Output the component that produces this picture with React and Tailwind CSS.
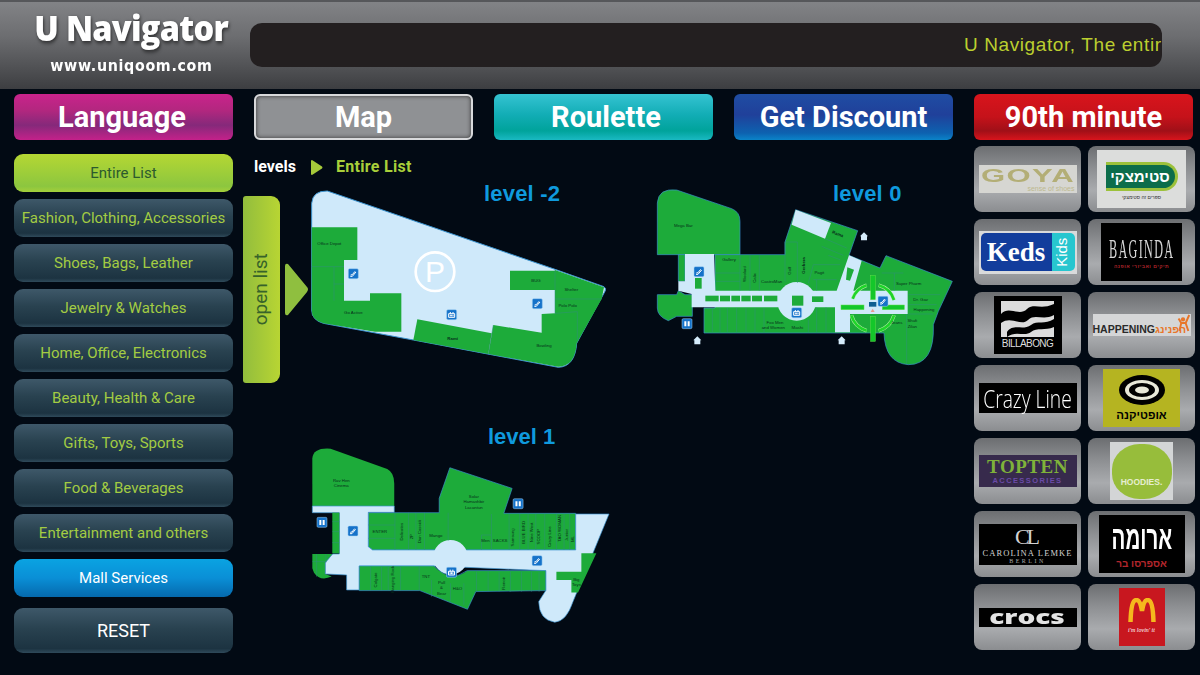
const GREEN = '#1dab3a';
const LIGHT = '#cfe9fa';
const EDGE = '#3b93cf';
const SHOP = '#2f8f78';

const tabs = [
  { label: 'Language', cls: 'pr-[3px] bg-[linear-gradient(180deg,#c9238c_0%,#b3277f_35%,#85297a_68%,#c4218a_100%)]' },
  { label: 'Map', cls: 'bg-[#8f9194] border-2 border-[#d8d9db] shadow-[inset_0_0_4px_#333]' },
  { label: 'Roulette', cls: 'pl-[5px] bg-[linear-gradient(180deg,#35c3d2_0%,#12adb5_45%,#00a39b_80%,#1ab9c2_100%)]' },
  { label: 'Get Discount', cls: 'bg-[linear-gradient(180deg,#1f4da3_0%,#20409a_45%,#0d62b0_85%,#0a84c9_100%)]' },
  { label: '90th minute', cls: 'bg-[linear-gradient(180deg,#d8141c_0%,#c5121a_50%,#a01018_80%,#d8141c_100%)]' },
];

const categories = [
  'Fashion, Clothing, Accessories',
  'Shoes, Bags, Leather',
  'Jewelry & Watches',
  'Home, Office, Electronics',
  'Beauty, Health & Care',
  'Gifts, Toys, Sports',
  'Food & Beverages',
  'Entertainment and others',
];

function Label({ x, y, rot, bold, children }) {
  return (
    <text
      x={x}
      y={y}
      textAnchor="middle"
      fontSize="13"
      fontWeight={bold ? 700 : 400}
      fill="#07301a"
      fontFamily="Liberation Sans, sans-serif"
      transform={rot ? `rotate(${rot} ${x} ${y})` : undefined}
    >
      {children}
    </text>
  );
}

function MapIcon({ x, y, kind }) {
  return (
    <g transform={`translate(${x - 15} ${y - 15})`}>
      <rect width="30" height="30" rx="4" fill="#1572c9" stroke="#9fd0f2" strokeWidth="1.5" />
      {kind === 'esc' && <path d="M6 23 L12 23 L23 10 M7 19 L12 18 L20 8" stroke="#fff" strokeWidth="3" fill="none" />}
      {kind === 'lift' && <path d="M6 23 V12 H24 V23 Z M11 12 V7 M19 12 V7 M11 15 V20 M15 15 V20 M19 15 V20" stroke="#fff" strokeWidth="3" fill="none" />}
      {kind === 'wc' && (
        <path d="M7 8 H13 V23 H7 Z M17 8 H23 V23 H17 Z" fill="#fff" />
      )}
    </g>
  );
}

function House({ x, y }) {
  return <path d={`M${x - 12} ${y} L${x} ${y - 12} L${x + 12} ${y} L${x + 9} ${y} V${y + 12} H${x - 9} V${y} Z`} fill="#d5ecfb" />;
}

function Shops({ lines }) {
  return (
    <g stroke={SHOP} strokeWidth="1.6" fill="none">
      {lines.map((d) => (
        <path key={d} d={d} />
      ))}
    </g>
  );
}

function LevelMinus2() {
  return (
    <svg viewBox="204 54 906 546" width="302" height="182" className="block">
      <path
        d="M215 100 Q218 62 262 63 L945 298 L1092 350 Q1100 356 1095 364 L1010 520 Q1005 590 955 592 L520 510 L250 460 Q215 450 215 420 Z"
        fill={LIGHT}
        stroke={EDGE}
        strokeWidth="3"
      />
      <g fill={GREEN}>
        <path d="M215 172 H352 V270 H312 V392 H390 V370 H484 V485 H405 L250 460 Q215 450 215 420 Z" />
        <path d="M532 448 L755 490 L745 552 L520 510 Z" />
        <path d="M810 302 H945 V360 H810 Z" />
        <path d="M945 300 L1092 352 L1085 387 H945 Z" />
        <path d="M945 387 H1085 L1010 520 Q1005 590 955 590 L745 552 L760 465 L905 488 V432 L945 430 Z" />
      </g>
      <Shops lines={['M215 290 H312', 'M282 290 V392', 'M282 342 H312', 'M945 300 V430', 'M945 387 H1085', 'M945 430 L1012 425 V510', 'M760 465 L745 552']} />
      <circle cx="585" cy="305" r="58" fill="none" stroke="#fff" strokeWidth="8" />
      <text x="585" y="337" textAnchor="middle" fontSize="90" fill="#fff" fontFamily="Liberation Sans, sans-serif">P</text>
      <MapIcon x={340} y={311} kind="esc" />
      <MapIcon x={892} y={401} kind="esc" />
      <MapIcon x={635} y={434} kind="lift" />
      <Label x={268} y={226}>Office Depot</Label>
      <Label x={340} y={431}>Go Active</Label>
      <Label x={888} y={335}>BUG</Label>
      <Label x={994} y={362}>Shelter</Label>
      <Label x={983} y={410}>Polo Polo</Label>
      <Label x={638} y={509} bold>Rami</Label>
      <Label x={912} y={532}>Bowling</Label>
    </svg>
  );
}

function LevelZero() {
  const arcs = [
    'M638 392 A66 66 0 0 1 680 352',
    'M716 352 A66 66 0 0 1 762 396',
    'M762 442 A68 68 0 0 1 716 488',
    'M680 488 A68 68 0 0 1 634 442',
  ];
  return (
    <svg viewBox="45 60 900 540" width="300" height="180" className="block">
      <g fill={GREEN} stroke={EDGE} strokeWidth="2">
        <path d="M52 105 Q55 60 110 66 L275 122 Q300 132 300 160 V260 H52 Z" />
        <path d="M225 260 H435 V222 L467 125 L653 188 L627 262 L720 300 L738 263 L937 340 L895 430 L880 470 Q885 590 805 590 Q735 585 732 495 H192 V420 H225 Z" />
        <path d="M52 380 H110 L115 368 L135 380 H157 V445 H110 L85 458 Q52 445 52 420 Z" />
        <path d="M115 260 H135 V340 H115 Z" />
      </g>
      <g fill={LIGHT}>
        <path d="M115 340 H135 V258 H222 L226 368 H590 L627 262 L665 278 L640 368 H803 V438 H630 V493 H585 V418 H155 V378 L115 368 Z" />
        <circle cx="470" cy="400" r="58" />
        <path d="M467 125 L573 165 L555 212 L455 170 Z" />
      </g>
      <g fill={GREEN}>
        <rect x="196" y="383" width="40" height="17" />
        <rect x="240" y="383" width="30" height="17" />
        <rect x="274" y="383" width="26" height="17" />
        <rect x="304" y="383" width="28" height="17" />
        <rect x="336" y="383" width="30" height="17" />
        <rect x="372" y="383" width="40" height="17" />
        <rect x="456" y="383" width="34" height="30" />
        <rect x="516" y="385" width="34" height="17" />
        <rect x="165" y="330" width="20" height="32" />
        <path d="M622 298 L642 305 L630 338 L618 335 Z" />
      </g>
      <Shops
        lines={[
          'M225 315 H300', 'M225 340 H300', 'M300 262 V368', 'M330 262 V368', 'M358 262 V368', 'M435 222 V340', 'M435 222 H472 V345',
          'M520 290 L505 345', 'M520 290 H600', 'M555 212 L620 240', 'M545 235 L610 262', 'M565 262 L600 275', 'M520 335 H590', 'M530 335 V368',
          'M217 420 V493', 'M240 420 V493', 'M262 420 V493', 'M290 420 V493', 'M318 420 V493', 'M345 420 V493', 'M372 420 V493', 'M505 455 V493', 'M530 418 V493', 'M558 418 V493',
          'M725 315 H790', 'M763 315 V368', 'M805 380 H900', 'M805 410 H890', 'M805 438 H880', 'M800 438 V590',
        ]}
      />
      <g fill="none" stroke="#b8f0a8" strokeWidth="11">
        {arcs.map((d) => (
          <path key={d} d={d} />
        ))}
      </g>
      <g fill="none" stroke="#1fd42a" strokeWidth="8">
        {arcs.map((d) => (
          <path key={d} d={d} />
        ))}
      </g>
      <g fill="#14c72a" stroke="#5fe048" strokeWidth="1.5">
        <rect x="692" y="322" width="14" height="73" />
        <rect x="692" y="445" width="14" height="75" />
        <rect x="603" y="411" width="69" height="14" />
        <rect x="727" y="411" width="66" height="14" />
      </g>
      <rect x="687" y="402" width="22" height="14" fill="#0f5e91" />
      <path d="M692 432 L698 422 L704 432 Z" fill="#e89a8f" />
      <MapIcon x={729} y={400} kind="esc" />
      <MapIcon x={177} y={311} kind="esc" />
      <MapIcon x={470} y={434} kind="lift" />
      <MapIcon x={141} y={467} kind="wc" />
      <House x={172} y={517} />
      <House x={605} y={517} />
      <House x={672} y={205} />
      <Label x={130} y={176}>Mega Bar</Label>
      <Label x={267} y={279}>Gallery</Label>
      <Label x={318} y={318} rot={-90}>Woolard</Label>
      <Label x={348} y={330} rot={-90}>Calix</Label>
      <Label x={395} y={344}>CastroMan</Label>
      <Label x={454} y={308} rot={-90}>Golf</Label>
      <Label x={494} y={292} rot={-90} bold>Gerbera</Label>
      <Label x={538} y={318}>Pagit</Label>
      <Label x={592} y={202} rot={20} bold>Rama</Label>
      <Label x={806} y={352}>Super Pharm</Label>
      <Label x={842} y={399}>Dr. Gav</Label>
      <Label x={852} y={428}>Happening</Label>
      <Label x={817} y={462}>Shufi</Label>
      <Label x={817} y={479}>Zilan</Label>
      <Label x={770} y={469}>Jeans</Label>
      <Label x={405} y={467}>Fox Men</Label>
      <Label x={400} y={484}>and Women</Label>
      <Label x={472} y={484}>Mashi</Label>
    </svg>
  );
}

function LevelOne() {
  return (
    <svg viewBox="30 75 910 540" width="303" height="180" className="block">
      <path d="M37 115 Q40 82 92 86 L262 147 Q283 158 283 190 V258 H37 Z" fill={GREEN} />
      <path d="M205 278 H418 V235 L450 143 L637 205 L612 280 H828 V390 H218 L205 380 Z" fill={GREEN} stroke={EDGE} strokeWidth="2" />
      <path d="M37 402 H98 L76 428 V462 L95 470 Q60 485 42 458 L37 445 Z" fill={GREEN} />
      <path
        d="M37 258 H283 V277 H205 V380 L218 390 H828 V282 H928 L820 545 Q800 605 765 607 Q718 600 717 545 L738 512 V452 L400 438 H178 V510 H140 V465 L76 462 V428 L98 402 H118 V278 H37 Z"
        fill={LIGHT}
        stroke={EDGE}
        strokeWidth="2"
      />
      <circle cx="452" cy="412" r="52" fill={LIGHT} />
      <path d="M97 278 H118 V400 H97 Z" fill={GREEN} />
      <path d="M178 438 H402 Q452 490 502 452 L738 452 V512 L528 515 L503 568 L360 512 H178 Z" fill={GREEN} stroke={EDGE} strokeWidth="2" />
      <path d="M845 400 H890 L835 518 H815 V480 H770 V455 H845 Z" fill={GREEN} />
      <Shops
        lines={[
          'M97 305 H118', 'M97 335 H118', 'M97 368 H118', 'M37 425 H76', 'M50 402 V470', 'M78 402 V428',
          'M205 315 H285', 'M205 355 H285', 'M285 278 V390', 'M326 278 V390', 'M348 278 V390', 'M374 278 V390', 'M445 278 V362',
          'M545 345 H575', 'M545 345 V390', 'M575 282 V390', 'M628 282 V390', 'M660 282 V390', 'M685 282 V390', 'M708 282 V390', 'M735 282 V390', 'M770 282 V390', 'M793 282 V390', 'M810 282 V390',
          'M212 440 V512', 'M245 440 V512', 'M265 440 V512', 'M302 440 V512', 'M358 440 V512', 'M395 480 V530', 'M452 490 V545', 'M492 490 V555', 'M530 455 V515', 'M565 455 V515', 'M598 455 V515', 'M632 455 V515', 'M665 455 V515', 'M695 455 V515', 'M718 455 V515',
        ]}
      />
      <MapIcon x={159} y={333} kind="esc" />
      <MapIcon x={712} y={422} kind="esc" />
      <MapIcon x={455} y={457} kind="lift" />
      <MapIcon x={655} y={251} kind="wc" />
      <MapIcon x={66} y={307} kind="wc" />
      <Label x={124} y={186}>Rav Hen</Label>
      <Label x={124} y={202}>Cinema</Label>
      <Label x={522} y={233}>Solar</Label>
      <Label x={522} y={250}>Hamashbir</Label>
      <Label x={522} y={266}>Lacantun</Label>
      <Label x={240} y={340}>ENTER</Label>
      <Label x={309} y={335} rot={-90}>Delicates</Label>
      <Label x={340} y={350} rot={-90}>2P</Label>
      <Label x={364} y={335} rot={-90}>Dan Cassidi</Label>
      <Label x={408} y={351}>Mango</Label>
      <Label x={557} y={365}>Men</Label>
      <Label x={601} y={366}>SACKS</Label>
      <Label x={644} y={352} rot={-90}>Samsung</Label>
      <Label x={676} y={337} rot={-90}>BLUE BIRD</Label>
      <Label x={701} y={337} rot={-90}>Nine West</Label>
      <Label x={722} y={350} rot={-90}>SCOOP</Label>
      <Label x={754} y={350} rot={-90}>Crazy Line</Label>
      <Label x={785} y={325} rot={-90}>TAO WOMAN</Label>
      <Label x={804} y={345} rot={-90}>Junior</Label>
      <Label x={824} y={357} rot={-90}>ML</Label>
      <Label x={232} y={480} rot={-90}>Colgate</Label>
      <Label x={281} y={478} rot={-90}>Hanging Rock</Label>
      <Label x={378} y={474}>TNT</Label>
      <Label x={425} y={492}>Pull</Label>
      <Label x={425} y={507}>&amp;</Label>
      <Label x={425} y={524}>Bear</Label>
      <Label x={473} y={511}>H&amp;O</Label>
      <Label x={617} y={490} rot={-90}>Renoir</Label>
      <Label x={830} y={482}>Big</Label>
      <Label x={830} y={497}>Toys</Label>
    </svg>
  );
}

function Tile({ children }) {
  return (
    <div className="h-[66px] rounded-[8px] flex items-center justify-center overflow-hidden bg-[linear-gradient(180deg,#6c6e71_0%,#8e9093_35%,#a9abae_68%,#8b8d90_100%)]">
      {children}
    </div>
  );
}

function Logos() {
  return (
    <div className="grid grid-cols-[107px_107px] gap-x-[7px] gap-y-[7px] font-['Liberation_Sans',sans-serif]">
      <Tile>
        <div className="w-[98px] h-[28px] bg-[#d6d6d2] relative overflow-hidden">
          <div className="text-[#b3ae76] text-[23px] leading-[22px] font-bold tracking-[1px] text-center scale-x-[1.35] scale-y-[0.8]">GOYA</div>
          <div className="absolute right-[2px] bottom-0 text-[#bdb98f] text-[7px] leading-[8px]">sense of shoes</div>
        </div>
      </Tile>
      <Tile>
        <div className="w-[89px] h-[58px] bg-[#dcdddc] flex flex-col items-center justify-center gap-[3px]">
          <div className="w-[72px] h-[29px] mt-[4px] rounded-r-[15px] border-[3px] border-l-0 border-[#9cc13b] bg-[#0c6d4b] text-white text-[15px] leading-[23px] font-bold text-center">סטימצקי</div>
          <div className="text-[#333] text-[5px] leading-[6px]">ספרים זה סטימצקי</div>
        </div>
      </Tile>
      <Tile>
        <div className="w-[98px] h-[43px] bg-[#d9dadb] flex items-center p-[2px]">
          <div className="w-[73px] h-[38px] bg-[#123d9c] rounded-l-[5px] text-white text-[27px] leading-[38px] font-bold text-center font-['Liberation_Serif',serif]">Keds</div>
          <div className="w-[23px] h-[38px] bg-[#27c6cf] rounded-r-[5px] flex items-center justify-center">
            <span className="-rotate-90 text-white text-[15px]">Kids</span>
          </div>
        </div>
      </Tile>
      <Tile>
        <div className="w-[81px] h-[58px] bg-black flex flex-col items-center justify-center">
          <div className="text-[#d8d8d8] text-[27px] leading-[28px] tracking-[3px] scale-x-[0.45] whitespace-nowrap font-['Liberation_Serif',serif]">BAGINDA</div>
          <div className="text-[#b3262c] text-[5px] leading-[7px] font-bold tracking-[0.5px] whitespace-nowrap">תיקים ואביזרי אופנה</div>
        </div>
      </Tile>
      <Tile>
        <div className="w-[68px] h-[58px] bg-black flex flex-col items-center pt-[5px]">
          <svg viewBox="0 0 53 36" width="53" height="36">
            <rect width="53" height="36" fill="#dcdcdc" />
            <path d="M0 13 C8 4 18 16 26 8 C33 2 40 9 53 3 V14 C42 20 34 12 27 19 C20 26 10 14 0 22 Z" fill="#000" />
            <path d="M6 31 C12 22 22 30 30 24 C36 19 44 24 53 18 V26 C44 30 36 26 30 31 C24 36 14 29 6 36 Z" fill="#000" />
          </svg>
          <div className="text-[#dedede] text-[10px] leading-[14px] tracking-[-0.6px] whitespace-nowrap">BILLABONG</div>
        </div>
      </Tile>
      <Tile>
        <div className="w-[98px] h-[22px] bg-[#d5d6d7] flex items-end justify-start relative">
          <span className="text-[#2a2a2a] text-[10.5px] leading-[14px] font-bold whitespace-nowrap">HAPPENING</span>
          <span className="text-[#e8762a] text-[10.5px] leading-[14px] font-bold whitespace-nowrap">הפנינג</span>
          <svg viewBox="0 0 18 20" width="16" height="18" className="absolute right-0 top-0">
            <path d="M4 5 L7 10 L5 19 M16 1 L12 10 L15 19 M7 10 H12" stroke="#e8762a" strokeWidth="2.2" fill="none" />
            <circle cx="9" cy="6" r="2.4" fill="#e8762a" />
          </svg>
        </div>
      </Tile>
      <Tile>
        <div className="w-[98px] h-[30px] bg-black text-white text-[25px] leading-[30px] flex justify-center whitespace-nowrap font-['Open_Sans',sans-serif] font-light">
          <span className="shrink-0 scale-x-[0.77]">Crazy Line</span>
        </div>
      </Tile>
      <Tile>
        <div className="w-[77px] h-[58px] bg-[#b5b421] flex flex-col items-center pt-[5px]">
          <svg viewBox="0 0 50 32" width="50" height="32">
            <ellipse cx="25" cy="16" rx="23" ry="15" fill="#000" />
            <ellipse cx="25" cy="16" rx="17" ry="10" fill="#e8e8d8" />
            <ellipse cx="25" cy="16" rx="13" ry="7" fill="#000" />
            <ellipse cx="25" cy="16" rx="7" ry="3.5" fill="#e8e8d8" />
          </svg>
          <div className="mt-[2px] text-black text-[11.5px] leading-[14px] font-bold whitespace-nowrap">אופטיקנה</div>
        </div>
      </Tile>
      <Tile>
        <div className="w-[98px] h-[32px] bg-[#372a4c] flex flex-col items-center justify-center">
          <div className="text-[#7fb23a] text-[19px] leading-[18px] font-bold tracking-[0.5px] font-['Liberation_Serif',serif]">TOPTEN</div>
          <div className="text-[#6a4aa8] text-[7.5px] leading-[9px] font-bold tracking-[1.4px]">ACCESSORIES</div>
        </div>
      </Tile>
      <Tile>
        <div className="w-[63px] h-[58px] bg-[#d3d5d6] flex items-center justify-center">
          <div className="w-[60px] h-[55px] rounded-[46%] bg-[#97bd3b] flex items-end justify-center pb-[12px] text-[#e6eed0] text-[8.5px] leading-[10px] font-bold">HOODIES.</div>
        </div>
      </Tile>
      <Tile>
        <div className="w-[98px] h-[41px] bg-black flex flex-col items-center justify-center font-['Liberation_Serif',serif] text-[#d2d2d2]">
          <div className="text-[22px] leading-[25px] tracking-[-3px] pr-[3px]">CL</div>
          <div className="text-[8.5px] leading-[9px] tracking-[1.1px] whitespace-nowrap">CAROLINA LEMKE</div>
          <div className="text-[6px] leading-[7px] tracking-[2.5px] text-[#aaa]">BERLIN</div>
        </div>
      </Tile>
      <Tile>
        <div className="w-[86px] h-[58px] bg-black flex flex-col items-center justify-center">
          <div className="text-white text-[33px] leading-[38px] font-bold whitespace-nowrap scale-x-[0.62]">ארומה</div>
          <div className="text-[#b3262c] text-[10px] leading-[13px] font-bold whitespace-nowrap">אספרסו בר</div>
        </div>
      </Tile>
      <Tile>
        <div className="w-[98px] h-[19px] bg-black text-[#e3e3e3] text-[20px] leading-[17px] font-extrabold flex justify-center font-['Open_Sans',sans-serif]">
          <span className="scale-x-[1.4]">crocs</span>
        </div>
      </Tile>
      <Tile>
        <div className="w-[46px] h-[58px] bg-[#c8171f] flex flex-col items-center pt-[10px]">
          <svg viewBox="0 0 28 24" width="28" height="24">
            <path d="M2.5 24 C3 8 5 2 8.5 2 C11.5 2 13 7 14 13 C15 7 16.5 2 19.5 2 C23 2 25 8 25.5 24" fill="none" stroke="#f5b81d" strokeWidth="4.5" />
          </svg>
          <div className="mt-[4px] text-white text-[6px] leading-[8px] italic whitespace-nowrap font-['Liberation_Serif',serif]">i'm lovin' it</div>
        </div>
      </Tile>
    </div>
  );
}

export default function App() {
  return (
    <div className="w-[1200px] h-[675px] overflow-hidden bg-[#020a14] font-['Roboto',sans-serif]">
      <header className="h-[89px] flex border-t-2 border-[#56575a] bg-[linear-gradient(180deg,#828386_0%,#6c6d70_40%,#3d3e41_100%)]">
        <div className="w-[250px] shrink-0 flex flex-col items-center pl-[12px]">
          <div className="mt-[6px] text-white text-[35px] leading-[40px] font-extrabold tracking-[-0.8px] drop-shadow-[1px_2px_2px_rgba(0,0,0,0.6)] font-['Open_Sans',sans-serif] scale-x-[0.93] whitespace-nowrap">U Navigator</div>
          <div className="mt-[9px] text-white text-[15px] leading-[18px] font-bold tracking-[0.7px] font-['DejaVu_Sans',sans-serif] scale-x-[0.95]">www.uniqoom.com</div>
        </div>
        <div className="mt-[21px] w-[912px] h-[44px] rounded-[12px] bg-[#231f20] overflow-hidden pl-[714px]">
          <div className="overflow-hidden whitespace-nowrap text-[#bccf2f] text-[19px] leading-[44px] tracking-[0.6px] font-['Liberation_Sans',sans-serif]">U Navigator, The entire</div>
        </div>
      </header>

      <nav className="mt-[5px] flex gap-[21px] pl-[14px]">
        {tabs.map((t) => (
          <div
            key={t.label}
            className={`w-[219px] h-[46px] rounded-[6px] flex items-center justify-center text-white text-[29px] leading-[48px] font-bold ${t.cls}`}
          >
            {t.label}
          </div>
        ))}
      </nav>

      <div className="flex">
        <aside className="w-[219px] ml-[14px] mt-[14px] shrink-0 flex flex-col gap-[7px] text-[15px]">
          <div className="h-[38px] pt-px rounded-[9px] flex items-center justify-center text-[#2c5a2e] bg-[linear-gradient(180deg,#b5d733_0%,#8cc63f_85%,#a4cf3a_100%)]">Entire List</div>
          {categories.map((c) => (
            <div
              key={c}
              className="h-[38px] pt-px rounded-[9px] flex items-center justify-center whitespace-nowrap text-[#a3cc43] bg-[linear-gradient(180deg,#3e5869_0%,#294250_45%,#1c3341_90%,#2f4a5a_100%)]"
            >
              {c}
            </div>
          ))}
          <div className="h-[38px] pt-px rounded-[9px] flex items-center justify-center text-white bg-[linear-gradient(180deg,#0aa3e2_0%,#0a8fd6_50%,#0569ad_100%)]">Mall Services</div>
          <div className="mt-[4px] h-[45px] rounded-[9px] flex items-center justify-center text-white text-[18px] bg-[linear-gradient(180deg,#3e5869_0%,#294250_45%,#1c3341_90%,#2f4a5a_100%)]">RESET</div>
        </aside>

        <main className="w-[722px] ml-[10px] shrink-0">
          <div className="mt-[18px] ml-[11px] h-[18px] flex items-center text-[16px] font-bold leading-[18px]">
            <span className="text-white">levels</span>
            <svg viewBox="0 0 12 15" width="12" height="15" className="ml-[15px]">
              <path d="M0 1 Q0 0 1 0 L11 6.5 Q12 7.5 11 8.5 L1 15 Q0 15 0 14 Z" fill="#a6c93a" />
            </svg>
            <span className="ml-[13px] tracking-[0.3px] text-[#a9cf3a]">Entire List</span>
          </div>
          <div className="mt-[12px] flex items-start">
            <div className="mt-[8px] w-[37px] h-[187px] rounded-r-[9px] rounded-l-[3px] flex items-center justify-center bg-[linear-gradient(90deg,#92bd3d,#b8d533)]">
              <span className="-rotate-90 whitespace-nowrap text-[#37632a] text-[19px]">open list</span>
            </div>
            <svg viewBox="0 0 23 53" width="23" height="53" className="mt-[75px] ml-[5px]">
              <path d="M0 3 Q0 0 3 1 L22 24 Q24 26 22 29 L3 52 Q0 53 0 50 Z" fill="#8fbf3f" />
            </svg>
            <div className="relative shrink-0">
              <LevelMinus2 />
              <div className="absolute left-[176px] top-[-6px] text-[#0f9ade] text-[22px] leading-[24px] font-bold tracking-[0.2px] whitespace-nowrap font-['Liberation_Sans',sans-serif]">level -2</div>
            </div>
            <div className="relative shrink-0 ml-[45px]">
              <LevelZero />
              <div className="absolute left-[178px] top-[-6px] text-[#0f9ade] text-[22px] leading-[24px] font-bold tracking-[0.2px] whitespace-nowrap font-['Liberation_Sans',sans-serif]">level 0</div>
            </div>
          </div>
          <div className="mt-[42px] ml-[67px]">
            <div className="ml-[178px] -mb-[4px] text-[#0f9ade] text-[22px] leading-[24px] font-bold whitespace-nowrap font-['Liberation_Sans',sans-serif]">level 1</div>
            <LevelOne />
          </div>
        </main>

        <aside className="mt-[6px] ml-[9px] shrink-0">
          <Logos />
        </aside>
      </div>
    </div>
  );
}
